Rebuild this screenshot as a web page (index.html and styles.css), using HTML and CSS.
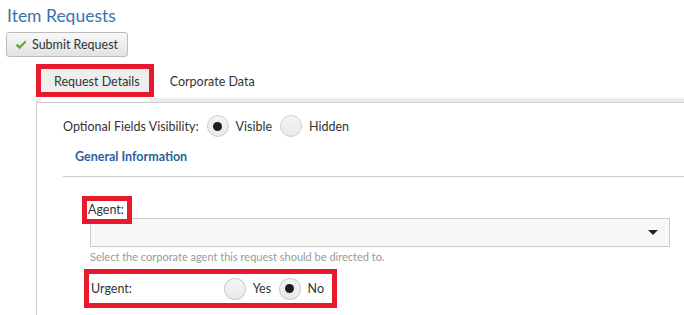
FILE: index.html
```html
<!DOCTYPE html>
<html lang="en">
<head>
    <meta charset="UTF-8">
    <meta name="viewport" content="width=device-width, initial-scale=1.0">
    <title>Item Requests</title>
    <link rel="stylesheet" href="styles.css">
</head>
<body>
    <h1 class="page-title">Item Requests</h1>
    <button class="btn-submit">
        <svg class="check" viewBox="0 0 12 10" width="12" height="10">
            <path d="M0.8 5.4 L2.6 3.8 L4.6 6 L10.2 0.6 L11.4 2 L4.6 9.2 Z" fill="#5aa832"/>
        </svg>
        Submit Request
    </button>

    <div class="tabs-wrap">
        <ul class="tabs">
            <li class="tab tab-active"><span class="tab-link">Request Details</span></li>
            <li class="tab"><span class="tab-link">Corporate Data</span></li>
        </ul>

        <div class="tab-panel">
            <div class="visibility-row">
                <span class="row-label">Optional Fields Visibility:</span>
                <span class="radio checked"></span><span class="radio-text">Visible</span>
                <span class="radio"></span><span class="radio-text">Hidden</span>
            </div>

            <h2 class="section-title">General Information</h2>

            <div class="field">
                <label class="field-label marked">Agent:</label>
                <div class="select-box"><span class="caret"></span></div>
                <div class="help-text">Select the corporate agent this request should be directed to.</div>
            </div>

            <div class="field-inline marked">
                <span class="inline-label">Urgent:</span>
                <span class="radio"></span><span class="radio-text">Yes</span>
                <span class="radio checked"></span><span class="radio-text">No</span>
            </div>
        </div>
    </div>
</body>
</html>
```

FILE: styles.css
```css
* {
    margin: 0;
    padding: 0;
    box-sizing: border-box;
}

body {
    font-family: Lato, 'Open Sans', sans-serif;
    font-size: 12.5px;
    color: #333;
    background: #fff;
    padding: 4px 0 0 6px;
    height: 315px;
    overflow: hidden;
}

.page-title {
    font-size: 17.5px;
    font-weight: normal;
    line-height: 24px;
    color: #3a72b0;
    margin-left: 1px;
}

.btn-submit {
    display: flex;
    align-items: center;
    gap: 5px;
    margin-top: 4px;
    height: 25px;
    width: 122px;
    padding: 0 8px;
    font-family: inherit;
    font-size: 12.5px;
    white-space: nowrap;
    color: #333;
    border: 1px solid #bdbdbd;
    border-radius: 3px;
    background: linear-gradient(#f8f8f8, #e2e2e2);
}

.tabs-wrap {
    margin: 7px 0 0 30px;
}

.tabs {
    list-style: none;
    display: flex;
    padding-left: 5px;
    background: linear-gradient(#fff calc(100% - 4px), #ececec 0);
    border-bottom: 1px solid #ccc;
}

.tab {
    padding: 5px 0 10px 0;
    background: #fff;
}

.tab + .tab {
    background: transparent;
    padding-left: 21px;
}

.tab-link {
    display: block;
    line-height: 21px;
    padding: 2px 0 0;
}

.tab-active .tab-link {
    background: #eee;
    padding: 2px 9px 0 13px;
    outline: 5px solid #e8192c;
}

.tab-panel {
    border-left: 1px solid #ccc;
    padding: 12px 0 40px 26px;
}

.visibility-row {
    display: flex;
    align-items: center;
    height: 22px;
}

.row-label {
    margin-right: 8px;
}

.radio {
    width: 22px;
    height: 22px;
    border-radius: 50%;
    border: 1px solid #cfcfcf;
    background: linear-gradient(#f4f4f4, #e9e9e9);
    display: flex;
    align-items: center;
    justify-content: center;
}

.radio.checked::after {
    content: '';
    width: 9px;
    height: 9px;
    border-radius: 50%;
    background: #1e1e1e;
}

.radio-text {
    margin: 0 8px 0 7px;
}

.section-title {
    font-size: 12.5px;
    font-weight: bold;
    color: #2c5f9e;
    line-height: 18px;
    margin: 11px 0 0 12px;
    padding-bottom: 10px;
}

.field {
    border-top: 1px solid #ccc;
    padding: 24px 14px 0 27px;
}

.field-label {
    display: inline-block;
    line-height: 18px;
    padding: 0 3px 0 1px;
    margin-left: -3px;
}

.marked {
    outline: 5px solid #e8192c;
    position: relative;
    z-index: 1;
    background: #fff;
}

.select-box {
    margin-top: -1px;
    height: 29px;
    border: 1px solid #ccc;
    background: #f7f7f7;
    display: flex;
    align-items: center;
    justify-content: flex-end;
    padding-right: 11px;
}

.caret {
    width: 0;
    height: 0;
    border-left: 5px solid transparent;
    border-right: 5px solid transparent;
    border-top: 5px solid #222;
}

.help-text {
    font-size: 11px;
    line-height: 14px;
    color: #999;
    margin-top: 3px;
}

.field-inline {
    display: flex;
    align-items: center;
    width: 243px;
    height: 29px;
    margin: 10px 0 0 26px;
    padding-left: 2px;
}

.inline-label {
    width: 137px;
}
```
